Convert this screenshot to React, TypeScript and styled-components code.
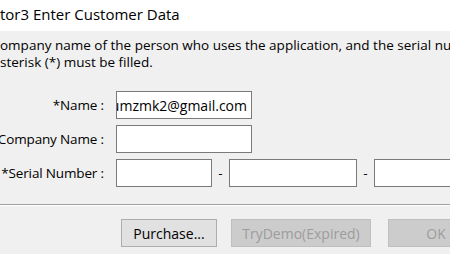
import React from 'react'
import styled, { createGlobalStyle } from 'styled-components'

const Global = createGlobalStyle`
  html, body {
    margin: 0;
    padding: 0;
    width: 450px;
    height: 254px;
    overflow: hidden;
    background: #f0f0f0;
  }
  * { box-sizing: border-box; }
`

const Window = styled.div`
  width: 520px;
  height: 254px;
  display: flex;
  flex-direction: column;
  font-family: "Open Sans", "Noto Sans", sans-serif;
  font-size: 13.5px;
  color: #000;
  background: #f0f0f0;
`

const TitleBar = styled.div`
  height: 31px;
  flex: none;
  background: #fff;
  display: flex;
  align-items: center;
  font-size: 15px;
  padding-bottom: 3px;
`

const Body = styled.div`
  flex: 1;
  display: flex;
  flex-direction: column;
`

const Note = styled.p`
  margin: 6px 0 0;
  line-height: 17px;
  white-space: nowrap;
`

const Form = styled.div`
  margin-top: 20px;
  display: grid;
  grid-template-columns: 104px auto;
  column-gap: 12px;
  row-gap: 6px;
  align-items: center;
`

const Label = styled.label`
  display: flex;
  justify-content: flex-end;
  white-space: nowrap;
  overflow: hidden;
  letter-spacing: -0.15px;
`

const Field = styled.div<{ w: number }>`
  width: ${p => p.w}px;
  height: 28px;
  background: #fff;
  border: 1px solid #7a7a7a;
  display: flex;
  align-items: center;
  justify-content: flex-end;
  overflow: hidden;
  white-space: nowrap;
  padding-right: 4px;
  font-size: 14px;
`

const SerialRow = styled.div`
  display: flex;
  align-items: center;
`

const Dash = styled.span`
  width: 17px;
  text-align: center;
`

const Separator = styled.div`
  margin-top: 17px;
  height: 2px;
  border-top: 1px solid #a0a0a0;
  border-bottom: 1px solid #fff;
`

const ButtonRow = styled.div`
  display: flex;
  padding-left: 121px;
  margin-top: 13px;
`

const Button = styled.button<{ w: number; gap?: number }>`
  width: ${p => p.w}px;
  height: 28px;
  margin-right: ${p => p.gap ?? 0}px;
  font: inherit;
  font-size: 14px;
  color: #000;
  background: #e1e1e1;
  border: 1px solid #adadad;
  padding: 0;
  &:disabled {
    color: #9c9c9c;
    background: #cccccc;
    border-color: #bfbfbf;
  }
`

export default function App() {
  return (
    <Window>
      <Global />
      <TitleBar>tor3 Enter Customer Data</TitleBar>
      <Body>
        <Note>
          ompany name of the person who uses the application, and the serial nu
          <br />
          sterisk (*) must be filled.
        </Note>
        <Form>
          <Label>*Name :</Label>
          <Field w={136}>umzmk2@gmail.com</Field>
          <Label>Company Name :</Label>
          <Field w={136} />
          <Label>*Serial Number :</Label>
          <SerialRow>
            <Field w={96} />
            <Dash>-</Dash>
            <Field w={128} />
            <Dash>-</Dash>
            <Field w={128} />
          </SerialRow>
        </Form>
        <Separator />
        <ButtonRow>
          <Button w={96} gap={14}>Purchase...</Button>
          <Button w={140} gap={17} disabled>TryDemo(Expired)</Button>
          <Button w={96} disabled>OK</Button>
        </ButtonRow>
      </Body>
    </Window>
  )
}
